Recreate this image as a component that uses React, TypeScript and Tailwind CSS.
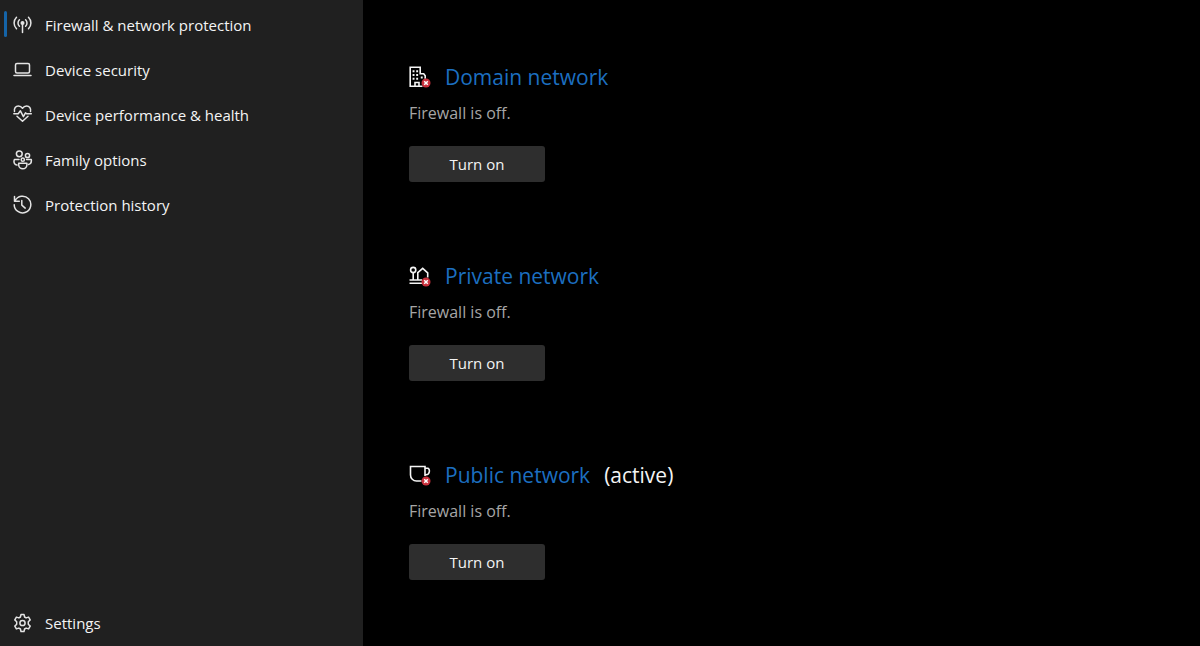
import type { ReactNode } from "react";

const navItems = [
    { label: "Firewall & network protection", icon: <AntennaIcon />, active: true },
    { label: "Device security", icon: <LaptopIcon /> },
    { label: "Device performance & health", icon: <HeartIcon /> },
    { label: "Family options", icon: <FamilyIcon /> },
    { label: "Protection history", icon: <HistoryIcon /> },
];

const networks = [
    { name: "Domain network", icon: <BuildingIcon /> },
    { name: "Private network", icon: <HouseIcon /> },
    { name: "Public network", icon: <CupIcon />, active: true },
];

export default function App() {
    return (
        <div className="flex min-h-screen bg-black font-['Open_Sans','Noto_Sans',sans-serif] text-[#f4f4f4]">
            {/* Sidebar */}
            <nav className="flex w-[363px] shrink-0 flex-col justify-between bg-[#202020] pt-[3px]">
                <div>
                    {navItems.map((item) => (
                        <NavLink key={item.label} {...item} />
                    ))}
                </div>
                <NavLink label="Settings" icon={<GearIcon />} />
            </nav>

            {/* Main Content */}
            <main className="flex flex-1 flex-col gap-20 px-[46px] pt-[63px] pb-16">
                {networks.map((network) => (
                    <NetworkSection key={network.name} {...network} />
                ))}
            </main>
        </div>
    );
}

function NavLink({ label, icon, active }: { label: string; icon: ReactNode; active?: boolean }) {
    return (
        <a href="#" aria-current={active ? "page" : undefined} className="flex h-[45px] items-center pl-1 text-[15px]">
            <span className={`mb-1 h-[26px] w-[3px] rounded-full ${active ? "bg-[#1564a8]" : ""}`} />
            <span className="mr-3 ml-[6px] pb-[2px]">{icon}</span>
            <span>{label}</span>
        </a>
    );
}

function NetworkSection({ name, icon, active }: { name: string; icon: ReactNode; active?: boolean }) {
    return (
        <section>
            <div className="flex h-[30px] items-center text-[21px]">
                <span className="mr-3 pb-[2px]">{icon}</span>
                <h2>
                    <a href="#" className="text-[#1c6fc0]">{name}</a>
                </h2>
                {active && <span className="ml-[14px]">(active)</span>}
            </div>
            <p className="mt-2 text-base text-[#a6a6a6]">Firewall is off.</p>
            <button type="button" className="mt-[21px] h-9 w-[136px] rounded-[3px] bg-[#2e2e2e] text-[15px]">
                Turn on
            </button>
        </section>
    );
}

function Icon({ children }: { children: ReactNode }) {
    return (
        <svg
            className="block h-5 w-5"
            viewBox="0 0 20 20"
            fill="none"
            stroke="#e4e4e4"
            strokeWidth="1.5"
            strokeLinecap="round"
            strokeLinejoin="round"
            aria-hidden="true"
        >
            {children}
        </svg>
    );
}

function AntennaIcon() {
    return (
        <Icon>
            <circle cx="9.5" cy="8" r="2" fill="#e4e4e4" stroke="none" />
            <path d="M9.5 9v8.5M6.4 11.3a4.6 4.6 0 0 1 0-6.6M12.6 4.7a4.6 4.6 0 0 1 0 6.6M3.5 13.8a8.2 8.2 0 0 1 0-11.6M15.5 2.2a8.2 8.2 0 0 1 0 11.6" />
        </Icon>
    );
}

function LaptopIcon() {
    return (
        <Icon>
            <rect x="2.5" y="3.5" width="14" height="9.5" rx="1.5" />
            <path d="M1 15.5h17" />
        </Icon>
    );
}

function HeartIcon() {
    return (
        <Icon>
            <path d="M1.5 6.5C.8 3.2 2.8 1 5.4 1c1.9 0 3.2 1 4.1 2.3C10.4 2 11.7 1 13.6 1c2.6 0 4.6 2.2 3.9 5.5M4 11.2l5.5 5 5.5-5" />
            <path d="M.8 8.8h4.4l2.2-3 3 5.8 2.1-3.8 1.1 1h4.7" />
        </Icon>
    );
}

function FamilyIcon() {
    return (
        <Icon>
            <circle cx="6.3" cy="3.8" r="2.9" />
            <circle cx="14.5" cy="5.5" r="2.1" />
            <circle cx="9.8" cy="9.7" r="1.6" />
            <path d="M6 9.5H1.4c-1.2 3 .4 5.2 2.6 5.6M13.6 9.5h4.7c.4 2.6-.8 4.6-2.8 5" />
            <path d="M5.7 13.3h8.2V15a4.1 3.8 0 0 1-8.2 0z" />
        </Icon>
    );
}

function HistoryIcon() {
    return (
        <Icon>
            <path d="M1.5 1.5v4.7h4.8M2 6a8.3 8.3 0 1 1-.8 3.7M8.8 5.5v4.6l3.4 3" />
        </Icon>
    );
}

function GearIcon() {
    return (
        <Icon>
            <circle cx="9.5" cy="10" r="2.6" />
            <path d="M8 1.5h3l.6 2.5 1.5.9 2.5-.8 1.6 2.8-1.9 1.8v2.6l1.9 1.8-1.6 2.8-2.5-.8-1.5.9-.6 2.5H8L7.4 16l-1.5-.9-2.5.8-1.6-2.8 1.9-1.8V8.7L1.8 6.9l1.6-2.8 2.5.8L7.4 4z" />
        </Icon>
    );
}

// Network glyph with the red "off" badge in its corner
function BadgedIcon({ children }: { children: ReactNode }) {
    return (
        <svg className="block h-6 w-6" viewBox="0 0 24 24" fill="none" stroke="#f5f5f5" strokeWidth="1.6" aria-hidden="true">
            {children}
            <circle cx="17" cy="18" r="4.5" fill="#c9303c" stroke="none" />
            <path d="m15.2 16.2 3.6 3.6m0-3.6-3.6 3.6" stroke="#fff" strokeWidth="1.5" />
        </svg>
    );
}

function BuildingIcon() {
    return (
        <BadgedIcon>
            <path d="M13.500 21.200H1.200V2.300h10v6.500h3.500l1.500 2v3M6 21.200v-3.700h4v3.700" />
            <path d="M3.600 6.200h1.900M7.200 6.200h1.900M3.600 10h1.900M7.200 10h1.900M3.600 13.800h1.900M7.200 13.800h1.900M11.800 12.500h1.900" strokeWidth="2" />
        </BadgedIcon>
    );
}

function HouseIcon() {
    return (
        <BadgedIcon>
            <circle cx="4.2" cy="6" r="2.6" />
            <path d="M4.2 8.600v7.200M.5 16H13M.5 19.200H13M8.800 16V8.600l4.900-4.300 5 4.600v4.600" />
        </BadgedIcon>
    );
}

function CupIcon() {
    return (
        <BadgedIcon>
            <path d="M12.500 18H7.500a6 6 0 0 1-6-6V3.500H16V13M16 5.300h2.600c2.600 0 2.600 6.400-1.600 6.400h-1" />
        </BadgedIcon>
    );
}
